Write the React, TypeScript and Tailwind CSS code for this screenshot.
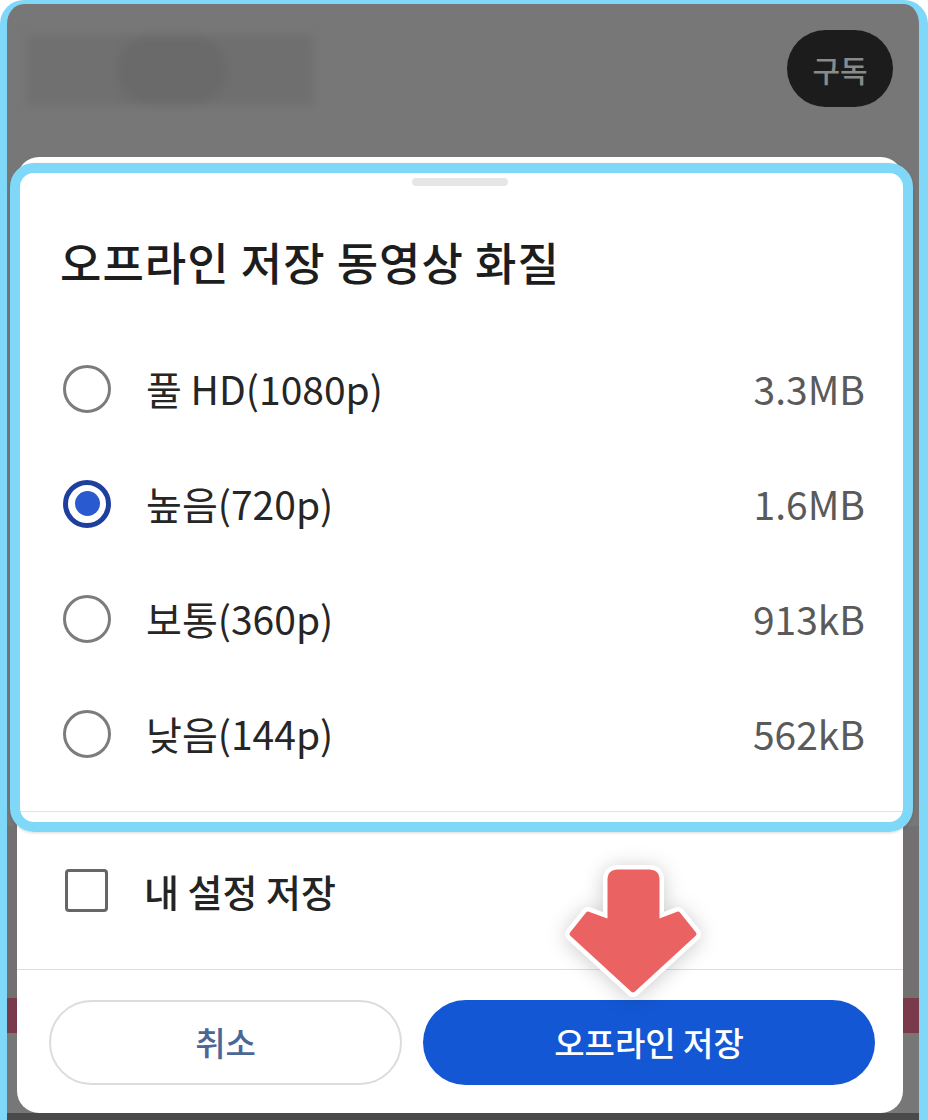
import React from "react";

const FONT = { fontFamily: '"Noto Sans CJK KR", "Noto Sans", sans-serif' };

const options = [
  { label: "풀 HD(1080p)", size: "3.3MB", selected: false },
  { label: "높음(720p)", size: "1.6MB", selected: true },
  { label: "보통(360p)", size: "913kB", selected: false },
  { label: "낮음(144p)", size: "562kB", selected: false },
];

function Radio({ selected }: { selected: boolean }) {
  if (selected) {
    return (
      <div className="w-[48px] h-[48px] rounded-full border-[5px] border-[#1f3f9e] flex items-center justify-center shrink-0">
        <div className="w-[25px] h-[25px] rounded-full bg-[#2a5ad0]" />
      </div>
    );
  }
  return <div className="w-[48px] h-[48px] rounded-full border-[3.5px] border-[#7c7c7c] shrink-0" />;
}

export default function App() {
  return (
    <div className="relative w-[928px] h-[1120px] overflow-hidden bg-white" style={FONT}>
      <div className="w-[928px] h-[1120px] border-t-[4px] border-l-[7px] border-r-[9px] border-b-0 border-[#80d8f8] rounded-t-[24px] overflow-hidden bg-[linear-gradient(to_bottom,#777777_0px,#777777_822px,#727070_822px,#727070_994px,#7a3a4b_994px,#7a3a4b_1029px,#777777_1029px,#777777_1109px,#4a4a4a_1109px)] flex flex-col">
        {/* top background area */}
        <div className="h-[153px] flex justify-between items-start pl-[20px] pr-[26px] pt-[26px] shrink-0">
          <div className="mt-[5px] w-[286px] h-[70px] bg-[#6f6f6f] blur-[4px] flex">
            <div className="w-[90px] h-full bg-[#707070]" />
            <div className="w-[110px] h-full bg-[#6a6a6a] rounded-full" />
          </div>
          <div className="w-[106px] h-[77px] rounded-full bg-[#1c1c1c] flex items-center justify-center">
            <span className="text-[30px] font-medium text-[#8a8a8a] leading-none">구독</span>
          </div>
        </div>

        {/* bottom sheet */}
        <div className="ml-[10px] w-[886px] bg-white rounded-[22px] pt-[21px] pb-[28px] flex flex-col shrink-0">
          <div className="self-center w-[96px] h-[8px] rounded-sm bg-[#e6e6e6]" />
          <div className="mt-[50px] pl-[43px] text-[45px] leading-[52px] font-medium text-[#1d1d1d] tracking-[1px]">
            오프라인 저장 동영상 화질
          </div>
          <div className="mt-[43px] flex flex-col">
            {options.map((o) => (
              <div key={o.label} className="h-[115px] flex items-center pl-[46px] pr-[38px]">
                <Radio selected={o.selected} />
                <span className="ml-[35px] text-[39px] text-[#262626] leading-none">{o.label}</span>
                <span className="ml-auto text-[39px] text-[#5a5a5a] leading-none">{o.size}</span>
              </div>
            ))}
          </div>
          <div className="mt-[20px] h-px bg-[#e2e2e2]" />
          <div className="h-[157px] flex items-center pl-[48px]">
            <div className="w-[43px] h-[43px] border-[3px] border-[#666666] rounded-[4px] shrink-0" />
            <span className="ml-[36px] text-[38px] font-medium text-[#242424] leading-none">내 설정 저장</span>
          </div>
          <div className="h-px bg-[#dedede]" />
          <div className="mt-[30px] flex pl-[32px] pr-[28px] gap-[21px]">
            <button className="w-[353px] h-[85px] rounded-full border-[2px] border-[#dcdcdc] bg-white flex items-center justify-center">
              <span className="text-[33px] font-medium text-[#4a6798] leading-none">취소</span>
            </button>
            <button className="w-[452px] h-[85px] rounded-full bg-[#1457d4] flex items-center justify-center">
              <span className="text-[33px] font-medium text-white leading-none">오프라인 저장</span>
            </button>
          </div>
        </div>
      </div>

      {/* highlight annotation */}
      <div className="absolute left-[10px] top-[163px] w-[903px] h-[669px] border-[10px] border-[#80d8f8] rounded-[24px] shadow-[0_1px_3px_rgba(0,0,0,0.15)] pointer-events-none" />

      {/* red arrow annotation */}
      <svg
        className="absolute left-[555px] top-[855px] drop-shadow-[0_2px_10px_rgba(0,0,0,0.2)]"
        width="160"
        height="150"
        viewBox="555 855 160 150"
      >
        <path
          d="M610 880 Q610 872 618 872 L649 872 Q657 872 657 880 L657 922 L678 914 L694 934 L633 990 L572 934 L588 914 L610 922 Z"
          fill="#ffffff"
          stroke="#ffffff"
          strokeWidth="14"
          strokeLinejoin="round"
        />
        <path
          d="M610 880 Q610 872 618 872 L649 872 Q657 872 657 880 L657 922 L678 914 L694 934 L633 990 L572 934 L588 914 L610 922 Z"
          fill="#eb6262"
          stroke="#eb6262"
          strokeWidth="5"
          strokeLinejoin="round"
        />
      </svg>
    </div>
  );
}
